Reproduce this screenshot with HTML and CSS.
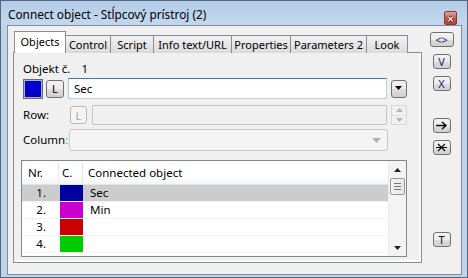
FILE: index.html
```html
<!DOCTYPE html>
<html lang="sk">
<head>
  <meta charset="UTF-8" />
  <title>Connect object</title>
  <link rel="stylesheet" href="styles.css">
</head>
<body>
<div class="window">
  <div class="titlebar">
    <span class="title">Connect object - Stĺpcový prístroj (2)</span>
    <span class="close">
      <svg width="13" height="14" viewBox="0 0 13 14">
        <path d="M4 4.5 L9 9.5 M9 4.5 L4 9.5" stroke="#5a2020" stroke-width="3" />
        <path d="M4 4.5 L9 9.5 M9 4.5 L4 9.5" stroke="#fff" stroke-width="1.6" />
      </svg>
    </span>
  </div>

  <div class="client">
    <div class="tabctl">
      <div class="tabs">
        <div class="tab active">Objects</div>
        <div class="tab">Control</div>
        <div class="tab">Script</div>
        <div class="tab">Info text/URL</div>
        <div class="tab">Properties</div>
        <div class="tab">Parameters 2</div>
        <div class="tab">Look</div>
      </div>

      <div class="panel">
        <div class="objno"><span>Objekt č.</span><span class="num">1</span></div>

        <div class="row r-name">
          <span class="swatch-big"></span>
          <span class="btn btn-l">L</span>
          <div class="edit focus">Sec</div>
          <span class="btn btn-drop">
            <svg width="8" height="5" viewBox="0 0 8 5"><path d="M0 0 H7 L3.5 4 Z" fill="#000" /></svg>
          </span>
        </div>

        <div class="row r-row">
          <label class="lbl lbl-row">Row:</label>
          <span class="btn btn-l disabled">L</span>
          <div class="edit disabled"></div>
          <div class="spin">
            <span><svg width="7" height="4" viewBox="0 0 7 4"><path d="M0 4 H7 L3.5 0 Z" fill="#b5b5b5" /></svg></span>
            <span><svg width="7" height="4" viewBox="0 0 7 4"><path d="M0 0 H7 L3.5 4 Z" fill="#b5b5b5" /></svg></span>
          </div>
        </div>

        <div class="row r-col">
          <label class="lbl lbl-col">Column<span class="colon">:</span></label>
          <div class="combo">
            <svg width="9" height="5" viewBox="0 0 9 5"><path d="M0 0 H9 L4.5 5 Z" fill="#b0b0b0" /></svg>
          </div>
          <span class="spacer"></span>
        </div>

        <div class="list">
          <div class="list-body">
            <div class="lhead">
              <span class="c-nr">Nr.</span>
              <span class="c-c">C.</span>
              <span class="c-name">Connected object</span>
            </div>
            <div class="lrow sel">
              <span class="c-nr">1.</span>
              <span class="c-c"><i class="sw sw-blue"></i></span>
              <span class="c-name">Sec</span>
            </div>
            <div class="lrow">
              <span class="c-nr">2.</span>
              <span class="c-c"><i class="sw sw-magenta"></i></span>
              <span class="c-name">Min</span>
            </div>
            <div class="lrow">
              <span class="c-nr">3.</span>
              <span class="c-c"><i class="sw sw-red"></i></span>
              <span class="c-name"></span>
            </div>
            <div class="lrow">
              <span class="c-nr">4.</span>
              <span class="c-c"><i class="sw sw-green"></i></span>
              <span class="c-name"></span>
            </div>
          </div>
          <div class="vscroll">
            <span class="arr"><svg width="7" height="4" viewBox="0 0 7 4"><path d="M0 4 H7 L3.5 0 Z" fill="#222" /></svg></span>
            <span class="thumb"><i></i><i></i><i></i></span>
            <span class="track"></span>
            <span class="arr"><svg width="7" height="4" viewBox="0 0 7 4"><path d="M0 0 H7 L3.5 4 Z" fill="#222" /></svg></span>
          </div>
        </div>
      </div>
    </div>

    <div class="sidebtns">
      <span class="sbtn wide b-swap">&lt;&gt;</span>
      <span class="sbtn b-v">V</span>
      <span class="sbtn b-x">X</span>
      <span class="sbtn b-arrow">
        <svg width="11" height="9" viewBox="0 0 11 9"><path d="M0 4.5 H9" stroke="#000" stroke-width="1.4" /><path d="M6 1 L10 4.5 L6 8" fill="none" stroke="#000" stroke-width="1.4" /></svg>
      </span>
      <span class="sbtn b-star">
        <svg width="11" height="11" viewBox="0 0 11 11"><path d="M2 2 L9 9 M9 2 L2 9 M0 5.5 H11" stroke="#000" stroke-width="1.1" /></svg>
      </span>
      <span class="sbtn b-t">T</span>
    </div>
  </div>
</div>
</body>
</html>
```

FILE: styles.css
```css
body {
  margin: 0;
  font-family: "Noto Sans", "Open Sans", sans-serif;
  font-size: 11.5px;
  color: #000;
}

.window {
  width: 468px;
  height: 278px;
  box-sizing: border-box;
  border: 1px solid #55687e;
  background-color: #bfd4eb;
  padding: 0 5px 2px 6px;
  display: flex;
  flex-direction: column;
}

/* TITLE BAR */
.titlebar {
  height: 24px;
  margin: 0 -5px 0 -6px;
  padding: 0 10px 0 7px;
  display: flex;
  align-items: flex-end;
  justify-content: space-between;
  background: linear-gradient(#b2cbe6, #c3d8ee);
}

.title {
  line-height: 14px;
  margin-bottom: 4px;
  font-size: 11.8px;
}

.close {
  width: 13px;
  height: 14px;
  box-sizing: border-box;
  border: 1px solid #7d3a36;
  border-radius: 2px;
  background: linear-gradient(#e3a59c, #c75a4c 50%, #b84232);
  display: flex;
}

/* CLIENT */
.client {
  flex: 1;
  display: flex;
  background-color: #f0f0f0;
  border: 1px solid #7d8ea4;
}

.tabctl {
  width: 409px;
  margin-left: 5px;
  padding: 5px 0 11px;
  display: flex;
  flex-direction: column;
}

.tabs {
  display: flex;
  align-items: flex-end;
  height: 22px;
  margin-bottom: -1px;
  padding-left: 1px;
  position: relative;
  z-index: 1;
}

.tab {
  height: 18px;
  box-sizing: border-box;
  border: 1px solid #898c95;
  border-bottom: none;
  margin-left: -1px;
  background: linear-gradient(#f3f3f3, #e6e6e6 50%, #dadada);
  text-align: center;
  font-size: 11px;
  line-height: 17px;
  white-space: nowrap;
  overflow: hidden;
}

.tab:nth-child(1) { width: 52px; margin-left: 0; }
.tab:nth-child(2) { width: 46px; }
.tab:nth-child(3) { width: 44px; }
.tab:nth-child(4) { width: 79px; }
.tab:nth-child(5) { width: 60px; }
.tab:nth-child(6) { width: 77px; }
.tab:nth-child(7) { width: 42px; }

.tab.active {
  height: 22px;
  background: #fff;
  line-height: 19px;
}

.panel {
  flex: 1;
  box-sizing: border-box;
  border: 1px solid #898c95;
  box-shadow: inset -2px -2px 0 #fbfbfb;
  background-color: #f0f0f0;
  padding: 0 14px 0 7px;
  display: flex;
  flex-direction: column;
}

.objno {
  margin: 9px 0 0 2px;
  line-height: 14px;
  display: flex;
}

.objno .num {
  margin-left: 11px;
}

.row {
  display: flex;
  align-items: center;
  margin-left: 2px;
}

.r-name { margin-top: 2px; height: 21px; }
.r-row { margin-top: 6px; height: 20px; }
.r-col { margin-top: 4px; height: 22px; }

.swatch-big {
  width: 20px;
  height: 20px;
  box-sizing: border-box;
  border: 1px solid #6a6a6a;
  box-shadow: inset 0 0 0 1px #b0b0c8;
  background-color: #0000cc;
}

.btn {
  box-sizing: border-box;
  border: 1px solid #707070;
  border-radius: 3px;
  background: linear-gradient(#f2f2f2, #ebebeb 50%, #dddddd 51%, #cfcfcf);
  display: flex;
  align-items: center;
  justify-content: center;
  font-size: 11px;
}

.btn-l {
  width: 18px;
  height: 18px;
  margin-left: 3px;
}

.btn-drop {
  width: 16px;
  height: 18px;
  margin-left: 4px;
}

.btn.disabled {
  border-color: #b8b8b8;
  background: #f4f4f4;
  color: #a3a3a3;
}

.edit {
  flex: 1;
  box-sizing: border-box;
  height: 21px;
  border: 1px solid #abadb3;
  background-color: #fff;
  padding-left: 5px;
  line-height: 19px;
  margin-left: 4px;
}

.edit.focus {
  border-color: #3d7bad #b5cfe7 #b5cfe7 #a4c9e3;
}

.edit.disabled {
  height: 20px;
  border-color: #c4c4c4;
  background-color: #f0f0f0;
  border-radius: 1px;
}

.r-row .btn-l {
  width: 17px;
  height: 18px;
  margin-left: 0;
}

.r-row .edit {
  margin-left: 5px;
}

.lbl {
  line-height: 14px;
}

.lbl-row { width: 47px; }
.lbl-col { width: 46px; }

.colon {
  color: #8a8a8a;
}

.spin {
  width: 16px;
  height: 20px;
  margin-left: 4px;
  box-sizing: border-box;
  border: 1px solid #d6d6d6;
  display: flex;
  flex-direction: column;
}

.spin span {
  flex: 1;
  display: flex;
  align-items: center;
  justify-content: center;
}

.spin span + span {
  border-top: 1px solid #e2e2e2;
}

.combo {
  flex: 1;
  height: 22px;
  box-sizing: border-box;
  border: 1px solid #c6c6c6;
  border-radius: 3px;
  background-color: #f4f4f4;
  display: flex;
  align-items: center;
  justify-content: flex-end;
  padding-right: 6px;
}

.spacer {
  width: 19px;
}

/* LIST */
.list {
  margin-top: 9px;
  height: 97px;
  box-sizing: border-box;
  border: 1px solid #828790;
  background-color: #fff;
  display: flex;
}

.list-body {
  flex: 1;
  display: flex;
  flex-direction: column;
}

.lhead,
.lrow {
  display: flex;
}

.lhead {
  height: 24px;
  box-sizing: border-box;
  border-bottom: 1px solid #e5e5e5;
  background: linear-gradient(#fff 60%, #f4f5f7);
  align-items: center;
}

.lhead span {
  line-height: 22px;
}

.lhead .c-nr,
.lhead .c-c {
  border-right: 1px solid #e8e8e8;
}

.lhead .c-nr { padding-left: 6px; width: 37px; }
.lhead .c-c { padding-left: 3px; width: 24px; }
.lhead .c-name { padding-left: 5px; }

.c-nr,
.c-c {
  box-sizing: border-box;
}

.lrow {
  height: 17px;
  box-sizing: border-box;
  border-bottom: 1px solid #f3f3f3;
  line-height: 16px;
}

.lrow .c-nr {
  width: 37px;
  text-align: right;
  padding-right: 13px;
}

.lrow .c-c {
  width: 25px;
  padding-left: 1px;
}

.lrow .c-name {
  padding-left: 6px;
}

.lrow.sel {
  background-color: #cccccc;
}

.sw {
  display: block;
  width: 23px;
  height: 16px;
}

.sw-blue { background-color: #0000a0; }
.sw-magenta { background-color: #cc00cc; }
.sw-red { background-color: #cc0000; }
.sw-green { background-color: #00cc00; }

.vscroll {
  width: 17px;
  background-color: #f3f3f3;
  border-left: 1px solid #ececec;
  display: flex;
  flex-direction: column;
  align-items: center;
}

.vscroll .arr {
  height: 17px;
  display: flex;
  align-items: center;
}

.thumb {
  width: 15px;
  height: 17px;
  box-sizing: border-box;
  border: 1px solid #979797;
  border-radius: 2px;
  background: linear-gradient(90deg, #f4f4f4, #e6e6e6);
  display: flex;
  flex-direction: column;
  align-items: center;
  justify-content: center;
  gap: 2px;
}

.thumb i {
  width: 7px;
  height: 1px;
  background-color: #777;
}

.track {
  flex: 1;
}

/* SIDE BUTTONS */
.sidebtns {
  flex: 1;
  display: flex;
  flex-direction: column;
  align-items: center;
  padding-top: 6px;
}

.sbtn {
  width: 18px;
  height: 15px;
  box-sizing: border-box;
  border: 1px solid #707070;
  border-radius: 3px;
  background: linear-gradient(#f2f2f2, #ebebeb 50%, #dddddd 51%, #cfcfcf);
  display: flex;
  align-items: center;
  justify-content: center;
  font-size: 11px;
  line-height: 13px;
  color: #1a1a70;
}

.sbtn.wide {
  width: 24px;
}

.b-v { margin-top: 7px; }
.b-x { margin-top: 7px; }
.b-arrow { margin-top: 27px; }
.b-star { margin-top: 7px; }
.b-t { margin-top: 77px; color: #111; }
```
